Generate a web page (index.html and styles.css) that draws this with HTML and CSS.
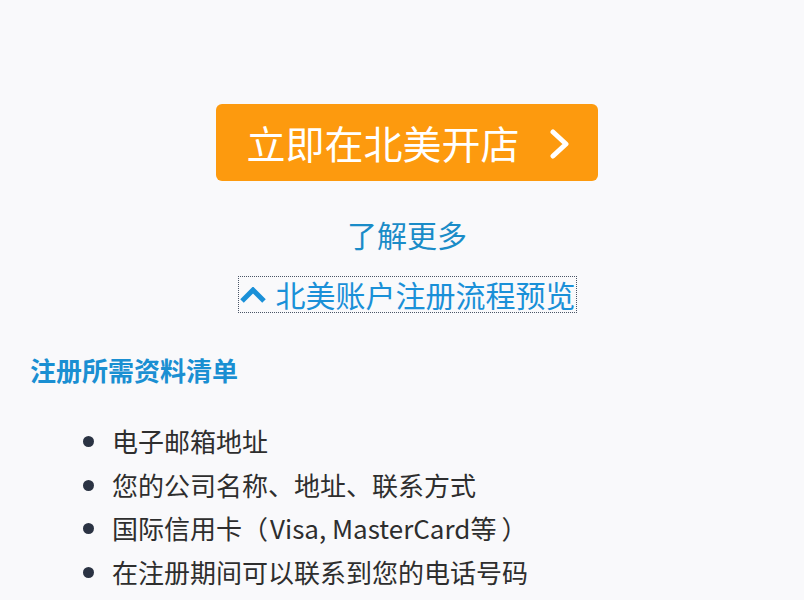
FILE: index.html
```html
<!DOCTYPE html>
<html lang="zh-CN">
<head>
<meta charset="utf-8">
<title>北美开店</title>
<link rel="stylesheet" href="styles.css">
</head>
<body>
<section class="cta">
  <a class="open-btn" href="#">
    <span class="open-label">立即在北美开店</span>
    <svg class="open-arrow" width="20" height="30" viewBox="0 0 20 30"><polyline points="3,3 16,15 3,27" fill="none" stroke="#fff" stroke-width="5" stroke-linecap="round" stroke-linejoin="round"/></svg>
  </a>
  <a class="more" href="#">了解更多</a>
  <a class="toggle" href="#">
    <svg class="toggle-icon" width="28" height="16" viewBox="0 0 28 16"><polyline points="3,14 14,3 25,14" fill="none" stroke="#1a90d8" stroke-width="5" stroke-linejoin="miter"/></svg>
    <span>北美账户注册流程预览</span>
  </a>
</section>
<section class="docs">
  <h2 class="docs-title">注册所需资料清单</h2>
  <ul class="docs-list">
    <li>电子邮箱地址</li>
    <li>您的公司名称、地址、联系方式</li>
    <li>国际信用卡<span class="paren-open">（</span>Visa, MasterCard等<span class="paren-close">）</span></li>
    <li>在注册期间可以联系到您的电话号码</li>
  </ul>
</section>
</body>
</html>
```
FILE: styles.css
```css
html, body {
  margin: 0;
  padding: 0;
}
body {
  background: #f9f9fb;
  font-family: "Noto Sans CJK SC", "Noto Sans", sans-serif;
  color: #333;
  padding-top: 104px;
  width: 804px;
  height: 600px;
  overflow: hidden;
  box-sizing: border-box;
}
.cta {
  display: flex;
  flex-direction: column;
  align-items: center;
  padding-left: 10px;
}
.open-btn {
  width: 382px;
  height: 77px;
  box-sizing: border-box;
  background: #fd9a0e;
  border-radius: 6px;
  display: flex;
  align-items: center;
  justify-content: center;
  gap: 30px;
  text-decoration: none;
  color: #fff;
}
.open-label {
  font-size: 39px;
  line-height: 77px;
  font-weight: 400;
  margin-left: 2px;
}
.open-arrow {
  display: block;
  margin-top: 2px;
}
.more {
  margin-top: 33px;
  font-size: 30px;
  line-height: 40px;
  color: #1a8cc8;
  text-decoration: none;
}
.toggle {
  margin-top: 23px;
  display: flex;
  align-items: center;
  gap: 9px;
  height: 35px;
  font-size: 30px;
  line-height: 35px;
  color: #1a90d8;
  text-decoration: none;
  outline: 1px dotted #4a5566;
  outline-offset: 0;
}
.toggle-icon {
  display: block;
  margin-top: 1px;
}
.docs {
  padding-left: 30px;
}
.docs-title {
  margin: 40px 0 0;
  font-size: 26px;
  line-height: 36px;
  font-weight: 700;
  color: #1a8fd2;
}
.docs-list {
  margin: 31px 0 0;
  padding: 0 0 0 82px;
  list-style: none;
}
.docs-list li {
  position: relative;
  font-size: 26px;
  line-height: 43.5px;
  color: #2e2e2e;
}
.docs-list li::before {
  content: "";
  position: absolute;
  left: -29px;
  top: 17px;
  width: 11px;
  height: 11px;
  border-radius: 50%;
  background: #2b3343;
}
.paren-open {
  margin-right: 2px;
}
.paren-close {
  margin-left: 5px;
}
```
